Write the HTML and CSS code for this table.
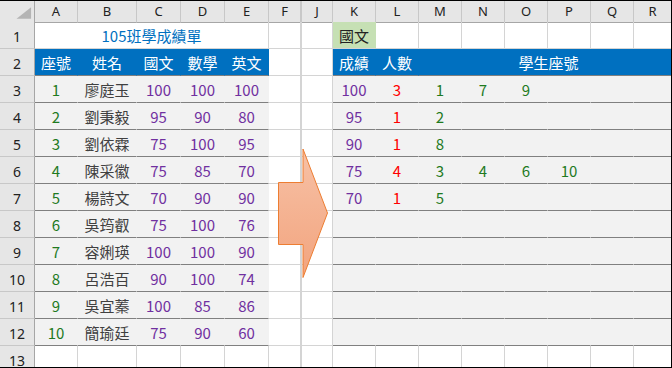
FILE: index.html
```html
<!DOCTYPE html>
<html lang="zh-Hant">
<head>
<meta charset="utf-8">
<title>105班學成績單</title>
<link rel="stylesheet" href="styles.css">
</head>
<body>
<div class="sheet">
  <div class="row colhead">
    <div class="corner"><svg width="35" height="21" viewBox="0 0 35 21"><polygon points="32,6 32,18 17,18" fill="#b4b4b4"/></svg></div>
    <div>A</div><div>B</div><div>C</div><div>D</div><div>E</div><div>F</div><div class="jcol">J</div>
    <div>K</div><div>L</div><div>M</div><div>N</div><div>O</div><div>P</div><div>Q</div><div>R</div>
  </div>

  <div class="row">
    <div class="rh">1</div>
    <div class="title">105班學成績單</div>
    <div></div><div class="jcol"></div>
    <div class="green">國文</div><div></div><div></div><div></div><div></div><div></div><div></div><div></div>
  </div>

  <div class="row">
    <div class="rh">2</div>
    <div class="hd">座號</div><div class="hd">姓名</div><div class="hd">國文</div><div class="hd">數學</div><div class="hd">英文</div>
    <div></div><div class="jcol"></div>
    <div class="hd">成績</div><div class="hd">人數</div><div class="hd span6">學生座號</div>
  </div>

  <div class="row">
    <div class="rh">3</div>
    <div class="d seat">1</div><div class="d nm">廖庭玉</div><div class="d sc">100</div><div class="d sc">100</div><div class="d sc">100</div>
    <div></div><div class="jcol"></div>
    <div class="d sc">100</div><div class="d cnt">3</div><div class="d seat">1</div><div class="d seat">7</div><div class="d seat">9</div><div class="d"></div><div class="d"></div><div class="d"></div>
  </div>

  <div class="row">
    <div class="rh">4</div>
    <div class="d seat">2</div><div class="d nm">劉秉毅</div><div class="d sc">95</div><div class="d sc">90</div><div class="d sc">80</div>
    <div></div><div class="jcol"></div>
    <div class="d sc">95</div><div class="d cnt">1</div><div class="d seat">2</div><div class="d"></div><div class="d"></div><div class="d"></div><div class="d"></div><div class="d"></div>
  </div>

  <div class="row">
    <div class="rh">5</div>
    <div class="d seat">3</div><div class="d nm">劉依霖</div><div class="d sc">75</div><div class="d sc">100</div><div class="d sc">95</div>
    <div></div><div class="jcol"></div>
    <div class="d sc">90</div><div class="d cnt">1</div><div class="d seat">8</div><div class="d"></div><div class="d"></div><div class="d"></div><div class="d"></div><div class="d"></div>
  </div>

  <div class="row">
    <div class="rh">6</div>
    <div class="d seat">4</div><div class="d nm">陳采徽</div><div class="d sc">75</div><div class="d sc">85</div><div class="d sc">70</div>
    <div></div><div class="jcol"></div>
    <div class="d sc">75</div><div class="d cnt">4</div><div class="d seat">3</div><div class="d seat">4</div><div class="d seat">6</div><div class="d seat">10</div><div class="d"></div><div class="d"></div>
  </div>

  <div class="row">
    <div class="rh">7</div>
    <div class="d seat">5</div><div class="d nm">楊詩文</div><div class="d sc">70</div><div class="d sc">90</div><div class="d sc">90</div>
    <div></div><div class="jcol"></div>
    <div class="d sc">70</div><div class="d cnt">1</div><div class="d seat">5</div><div class="d"></div><div class="d"></div><div class="d"></div><div class="d"></div><div class="d"></div>
  </div>

  <div class="row">
    <div class="rh">8</div>
    <div class="d seat">6</div><div class="d nm">吳筠叡</div><div class="d sc">75</div><div class="d sc">100</div><div class="d sc">76</div>
    <div></div><div class="jcol"></div>
    <div class="d"></div><div class="d"></div><div class="d"></div><div class="d"></div><div class="d"></div><div class="d"></div><div class="d"></div><div class="d"></div>
  </div>

  <div class="row">
    <div class="rh">9</div>
    <div class="d seat">7</div><div class="d nm">容娳瑛</div><div class="d sc">100</div><div class="d sc">100</div><div class="d sc">90</div>
    <div></div><div class="jcol"></div>
    <div class="d"></div><div class="d"></div><div class="d"></div><div class="d"></div><div class="d"></div><div class="d"></div><div class="d"></div><div class="d"></div>
  </div>

  <div class="row">
    <div class="rh">10</div>
    <div class="d seat">8</div><div class="d nm">呂浩百</div><div class="d sc">90</div><div class="d sc">100</div><div class="d sc">74</div>
    <div></div><div class="jcol"></div>
    <div class="d"></div><div class="d"></div><div class="d"></div><div class="d"></div><div class="d"></div><div class="d"></div><div class="d"></div><div class="d"></div>
  </div>

  <div class="row">
    <div class="rh">11</div>
    <div class="d seat">9</div><div class="d nm">吳宜蓁</div><div class="d sc">100</div><div class="d sc">85</div><div class="d sc">86</div>
    <div></div><div class="jcol"></div>
    <div class="d"></div><div class="d"></div><div class="d"></div><div class="d"></div><div class="d"></div><div class="d"></div><div class="d"></div><div class="d"></div>
  </div>

  <div class="row">
    <div class="rh">12</div>
    <div class="d seat">10</div><div class="d nm">簡瑜廷</div><div class="d sc">75</div><div class="d sc">90</div><div class="d sc">60</div>
    <div></div><div class="jcol"></div>
    <div class="d"></div><div class="d"></div><div class="d"></div><div class="d"></div><div class="d"></div><div class="d"></div><div class="d"></div><div class="d"></div>
  </div>

  <div class="row">
    <div class="rh">13</div>
    <div></div><div></div><div></div><div></div><div></div><div></div><div class="jcol"></div>
    <div></div><div></div><div></div><div></div><div></div><div></div><div></div><div></div>
  </div>

  <svg class="arrow" width="54" height="134" viewBox="0 0 54 134">
    <defs>
      <linearGradient id="ag" x1="0" y1="0" x2="0" y2="1">
        <stop offset="0" stop-color="#f7c1a6"/>
        <stop offset="1" stop-color="#f2a47e"/>
      </linearGradient>
    </defs>
    <polygon points="1.5,35.5 26,35.5 26,2 50.5,66 26,130.5 26,97.5 1.5,97.5" fill="url(#ag)" stroke="#ed7d31" stroke-width="1"/>
  </svg>
</div>
</body>
</html>
```

FILE: styles.css
```css
html, body {
  margin: 0;
  padding: 0;
  background: #fff;
}

.sheet {
  position: relative;
  width: 672px;
  height: 368px;
  box-sizing: border-box;
  border-top: 1px solid #000;
  border-right: 1px solid #000;
  border-bottom: 1px solid #000;
  overflow: hidden;
  background: #fff;
  font-family: "Noto Sans CJK TC", "Noto Sans", sans-serif;
}

.row {
  display: grid;
  grid-template-columns: 35px 43px 59px 44px 44px 44px 32px 32px 43px 43px 43px 43px 43px 43px 43px 37px;
  height: 27px;
}

.row > div {
  box-sizing: border-box;
  min-width: 0;
  border-right: 1px solid #d4d4d4;
  border-bottom: 1px solid #d4d4d4;
  display: flex;
  align-items: center;
  justify-content: center;
  font-size: 15px;
  line-height: 1;
  white-space: nowrap;
}

.row > div:last-child {
  border-right: none;
}

.row > .jcol {
  border-left: 1px solid #d4d4d4;
}

.colhead {
  height: 21px;
}

.colhead > div {
  background: #e6e6e6;
  border-right-color: #c8c8c8;
  border-bottom-color: #a6a6a6;
  font-family: "Noto Sans", "DejaVu Sans", sans-serif;
  font-size: 13px;
  color: #222;
}

.colhead > .jcol {
  border-left-color: #c8c8c8;
}

.colhead > .corner {
  border-right-color: #a6a6a6;
  padding: 0;
}

.corner svg {
  display: block;
}

.row > .rh {
  background: #e6e6e6;
  border-right-color: #a6a6a6;
  border-bottom-color: #c8c8c8;
  font-family: "Noto Sans", "DejaVu Sans", sans-serif;
  font-size: 14px;
  color: #222;
  align-items: flex-end;
  padding-bottom: 4px;
}

.row > .title {
  grid-column: span 5;
  color: #0070c0;
  font-size: 15px;
}

.row > .green {
  background: #c6e0b4;
  border-right-color: #c6e0b4;
  color: #222;
}

.row > .hd {
  background: #0070c0;
  border-right-color: #0070c0;
  border-bottom-color: #808080;
  color: #fff;
}

.row > .span6 {
  grid-column: span 6;
  padding-left: 7px;
}

.row > .d {
  background: #f2f2f2;
  border-right-color: #f2f2f2;
  border-bottom-color: #808080;
}

.seat {
  color: #1f7a1f;
}

.nm {
  color: #404040;
}

.sc {
  color: #7030a0;
}

.cnt {
  color: #ff0000;
}

.arrow {
  position: absolute;
  left: 277px;
  top: 146px;
}
```
